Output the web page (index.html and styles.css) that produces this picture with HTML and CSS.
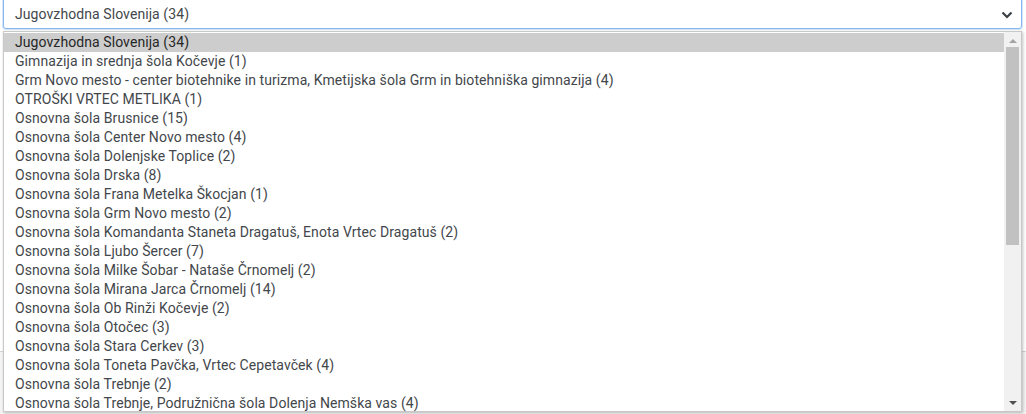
FILE: index.html
```html
<!DOCTYPE html>
<html lang="sl">
<head>
    <meta charset="UTF-8">
    <title>Izbira šole</title>
    <link rel="stylesheet" href="styles.css">
</head>
<body>
    <div class="page">
        <div class="select">
            <span class="select-value">Jugovzhodna Slovenija (34)</span>
            <svg class="chevron" width="12" height="8" viewBox="0 0 12 8">
                <polyline points="1.5,1.5 6,6 10.5,1.5" fill="none" stroke="#3a3f45" stroke-width="2.2"/>
            </svg>
        </div>
        <div class="behind"></div>

        <div class="dropdown">
            <ul class="options">
                <li class="selected">Jugovzhodna Slovenija (34)</li>
                <li>Gimnazija in srednja šola Kočevje (1)</li>
                <li>Grm Novo mesto - center biotehnike in turizma, Kmetijska šola Grm in biotehniška gimnazija (4)</li>
                <li>OTROŠKI VRTEC METLIKA (1)</li>
                <li>Osnovna šola Brusnice (15)</li>
                <li>Osnovna šola Center Novo mesto (4)</li>
                <li>Osnovna šola Dolenjske Toplice (2)</li>
                <li>Osnovna šola Drska (8)</li>
                <li>Osnovna šola Frana Metelka Škocjan (1)</li>
                <li>Osnovna šola Grm Novo mesto (2)</li>
                <li>Osnovna šola Komandanta Staneta Dragatuš, Enota Vrtec Dragatuš (2)</li>
                <li>Osnovna šola Ljubo Šercer (7)</li>
                <li>Osnovna šola Milke Šobar - Nataše Črnomelj (2)</li>
                <li>Osnovna šola Mirana Jarca Črnomelj (14)</li>
                <li>Osnovna šola Ob Rinži Kočevje (2)</li>
                <li>Osnovna šola Otočec (3)</li>
                <li>Osnovna šola Stara Cerkev (3)</li>
                <li>Osnovna šola Toneta Pavčka, Vrtec Cepetavček (4)</li>
                <li>Osnovna šola Trebnje (2)</li>
                <li>Osnovna šola Trebnje, Podružnična šola Dolenja Nemška vas (4)</li>
            </ul>
            <div class="scrollbar">
                <span class="arrow up"></span>
                <div class="thumb"></div>
                <span class="arrow down"></span>
            </div>
        </div>
    </div>
</body>
</html>
```

FILE: styles.css
```css
body {
    margin: 0;
    background: #ffffff;
    font-family: "Roboto", "Liberation Sans", sans-serif;
    font-size: 14px;
    letter-spacing: 0.08px;
    color: #43474b;
}

.page {
    position: relative;
    height: 414px;
    overflow: hidden;
}

.select {
    display: flex;
    align-items: center;
    justify-content: space-between;
    height: 29px;
    margin: -2px 4px 0 3px;
    padding: 0 8px 0 11px;
    border: 1px solid #86b7ef;
    border-radius: 0 0 3px 3px;
    box-shadow: 0 0 0 1px rgba(134, 183, 239, 0.35);
    background: #fff;
}

.select-value {
    padding-top: 1px;
}

.chevron {
    display: block;
    margin-top: 3px;
}

.behind {
    margin-top: 322px;
    height: 80px;
    border-top: 1px solid #d5d5d5;
    background: #f4f4f4;
}

.dropdown {
    position: absolute;
    top: 31px;
    left: 3px;
    width: 1017px;
    height: 379px;
    display: flex;
    background: #fff;
    border: 1px solid #c8c8c8;
    box-shadow: 1px 1px 3px rgba(0, 0, 0, 0.25);
}

.options {
    flex: 1;
    margin: 0;
    padding: 1px 0 0;
    list-style: none;
}

.options li {
    height: 19px;
    line-height: 19px;
    padding-left: 11px;
    white-space: nowrap;
}

.options li.selected {
    background: #cdcdcd;
    color: #262626;
}

.scrollbar {
    width: 17px;
    display: flex;
    flex-direction: column;
    align-items: center;
    background: #f1f1f1;
}

.thumb {
    width: 13px;
    height: 198px;
    margin-top: 4px;
    background: #c1c1c1;
}

.arrow {
    width: 0;
    height: 0;
    border-left: 4px solid transparent;
    border-right: 4px solid transparent;
}

.arrow.up {
    margin-top: 7px;
    border-bottom: 4px solid #a3a3a3;
}

.arrow.down {
    margin-top: auto;
    margin-bottom: 6px;
    border-top: 4px solid #505050;
}
```
